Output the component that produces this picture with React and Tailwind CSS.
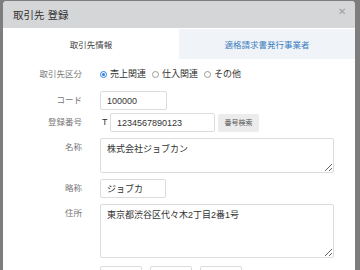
import React from 'react';

const jp = { fontFamily: '"Liberation Sans", "Noto Sans CJK JP", sans-serif' };

const Radio = ({ checked, label }) => (
  <label className="flex items-center gap-[3px] mr-[6px]">
    <span
      className={`w-[7px] h-[7px] rounded-full border flex items-center justify-center ${
        checked ? 'border-[#2f7de1]' : 'border-[#9a9a9a]'
      }`}
    >
      {checked && <span className="w-[3px] h-[3px] rounded-full bg-[#2f7de1]" />}
    </span>
    <span className="text-[9px] text-[#333]">{label}</span>
  </label>
);

const Row = ({ label, children, className = '' }) => (
  <div className={`flex ${className}`}>
    <div className="w-[79px] shrink-0 text-right text-[8.5px] text-[#777] leading-[19px]">{label}</div>
    <div className="ml-[18px] flex-1 leading-none">{children}</div>
  </div>
);

const inputCls =
  'block h-[19px] border border-[#dcdcdc] rounded-[2px] px-[6px] text-[9px] text-[#333] bg-white outline-none';
const areaCls =
  'block w-[234px] border border-[#dcdcdc] rounded-[2px] px-[6px] py-[3px] text-[9px] text-[#333] bg-white outline-none leading-[14px]';

export default function App() {
  return (
    <div className="w-[360px] h-[270px] overflow-hidden bg-[#7d7d7d] flex" style={jp}>
      <div className="ml-[3px] mt-[1px] w-[352px] h-[300px] bg-white rounded-t-[4px] overflow-hidden">
        {/* Header */}
        <div className="h-[27px] bg-[#d5d6d8] flex items-center justify-between pl-[10px] pr-[9px]">
          <span className="text-[10.5px] text-[#333] pt-[2px]">取引先 登録</span>
          <span className="text-[10px] text-[#a0a0a0] leading-none mb-[5px]">✕</span>
        </div>

        {/* Tabs */}
        <div className="flex h-[30px] mt-[1px]">
          <div className="w-[176px] flex items-center justify-center pt-[3px] text-[8.5px] text-[#444] bg-white">
            取引先情報
          </div>
          <div className="flex-1 flex items-center justify-center pt-[3px] text-[8.5px] text-[#3d7fc0] bg-[#f0f4f8]">
            適格請求書発行事業者
          </div>
        </div>

        {/* Form */}
        <div className="pt-[6px]">
          <Row label="取引先区分">
            <div className="flex items-center h-[19px]">
              <Radio checked label="売上関連" />
              <Radio label="仕入関連" />
              <Radio label="その他" />
            </div>
          </Row>

          <Row label="コード" className="mt-[7px]">
            <input className={`${inputCls} w-[67px]`} defaultValue="100000" readOnly />
          </Row>

          <Row label="登録番号" className="mt-[3px]">
            <div className="flex items-center h-[19px]">
              <span className="text-[9px] text-[#333] ml-[2px] w-[8px]">T</span>
              <input className={`${inputCls} w-[105px]`} defaultValue="1234567890123" readOnly />
              <button className="ml-[3px] h-[18px] w-[41px] bg-[#ececec] rounded-[2px] text-[7px] text-[#555]">
                番号検索
              </button>
            </div>
          </Row>

          <Row label="名称" className="mt-[6px]">
            <textarea className={`${areaCls} h-[35px]`} defaultValue="株式会社ジョブカン" readOnly />
          </Row>

          <Row label="略称" className="mt-[6px]">
            <input className={`${inputCls} w-[66px]`} defaultValue="ジョブカ" readOnly />
          </Row>

          <Row label="住所" className="mt-[6px]">
            <textarea className={`${areaCls} h-[54px]`} defaultValue="東京都渋谷区代々木2丁目2番1号" readOnly />
          </Row>

          <Row label="" className="mt-[8px]">
            <div className="flex gap-[8px]">
              <input className={`${inputCls} w-[42px]`} readOnly />
              <input className={`${inputCls} w-[42px]`} readOnly />
              <input className={`${inputCls} w-[42px]`} readOnly />
            </div>
          </Row>
        </div>
      </div>
    </div>
  );
}
